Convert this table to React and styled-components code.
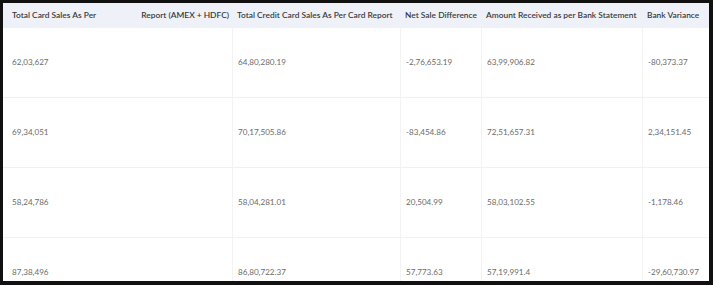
import React from "react";
import styled, { createGlobalStyle } from "styled-components";

const Global = createGlobalStyle`
  html, body { margin: 0; padding: 0; background: #fff; }
  body { font-family: "Lato", "Open Sans", sans-serif; }
`;

const Frame = styled.div`
  box-sizing: border-box;
  width: 713px;
  height: 285px;
  border-style: solid;
  border-color: #111;
  border-width: 3px 4px 4px 3px;
  overflow: hidden;
  background: #fff;
`;

const Grid = styled.div`
  display: grid;
  grid-template-columns: 229px 168px 81px 161px 67px;
  grid-auto-rows: 70px;
  grid-template-rows: 25px;
`;

const HeadCell = styled.div`
  background: #eef1f8;
  display: flex;
  align-items: center;
  justify-content: ${(p) => (p.$split ? "space-between" : "flex-start")};
  padding: 0 3px 1px ${(p) => (p.$first ? "9px" : "5px")};
  font-size: 8.4px;
  font-weight: 600;
  color: #3a3a3a;
  white-space: nowrap;
`;

const Cell = styled.div`
  display: flex;
  align-items: center;
  padding: 0 4px 1px ${(p) => (p.$first ? "9px" : "5px")};
  font-size: 8.1px;
  color: #6b6b6b;
  border-left: ${(p) => (p.$first ? "none" : "1px solid #f3f3f3")};
  border-bottom: 1px solid #f1f1f1;
  white-space: nowrap;
`;

const rows = [
  ["62,03,627", "64,80,280.19", "-2,76,653.19", "63,99,906.82", "-80,373.37"],
  ["69,34,051", "70,17,505.86", "-83,454.86", "72,51,657.31", "2,34,151.45"],
  ["58,24,786", "58,04,281.01", "20,504.99", "58,03,102.55", "-1,178.46"],
  ["87,38,496", "86,80,722.37", "57,773.63", "57,19,991.4", "-29,60,730.97"],
];

export default function App() {
  return (
    <>
      <Global />
      <Frame>
        <Grid>
          <HeadCell $first $split>
            <span>Total Card Sales As Per</span>
            <span>Report (AMEX + HDFC)</span>
          </HeadCell>
          <HeadCell>Total Credit Card Sales As Per Card Report</HeadCell>
          <HeadCell>Net Sale Difference</HeadCell>
          <HeadCell>Amount Received as per Bank Statement</HeadCell>
          <HeadCell>Bank Variance</HeadCell>
          {rows.map((r, i) =>
            r.map((v, j) => (
              <Cell key={`${i}-${j}`} $first={j === 0}>
                {v}
              </Cell>
            ))
          )}
        </Grid>
      </Frame>
    </>
  );
}
